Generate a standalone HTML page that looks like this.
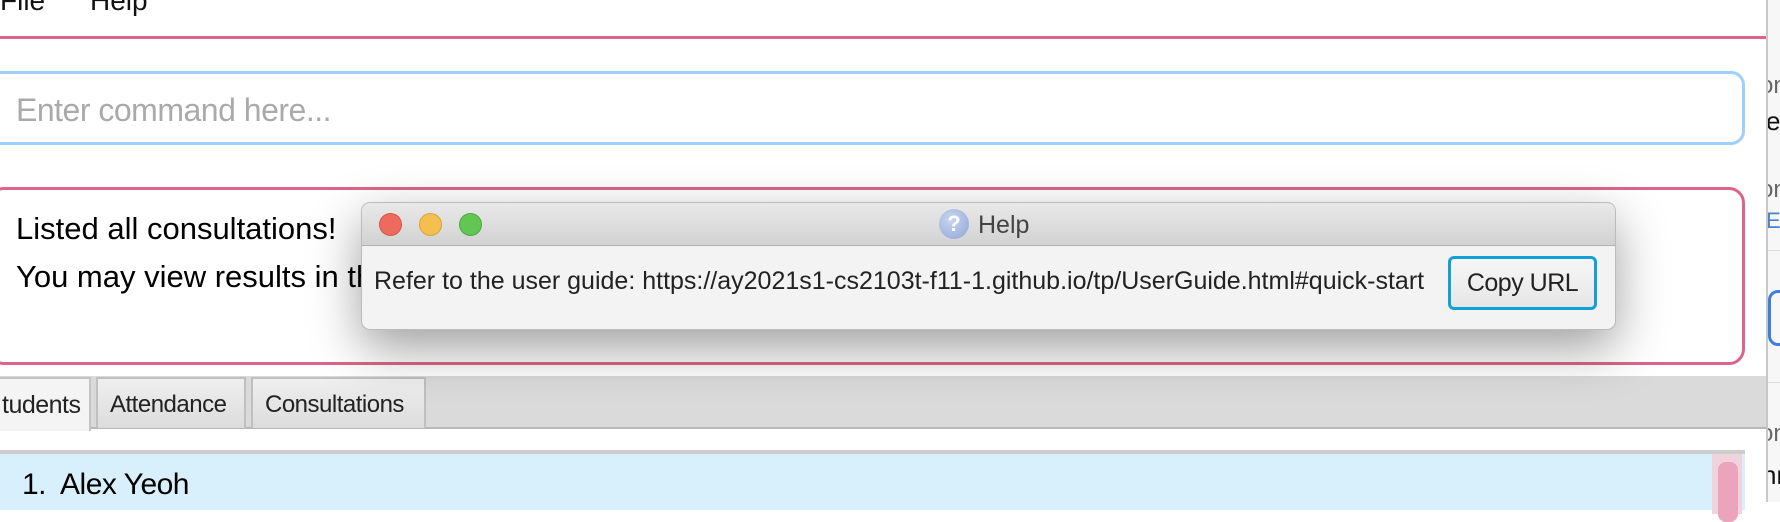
<!DOCTYPE html>
<html><head><meta charset="utf-8"><style>
*{margin:0;padding:0;box-sizing:border-box}
body{width:1780px;height:502px;overflow:hidden;background:#fff;font-family:"Liberation Sans",sans-serif;position:relative}
.a{position:absolute}
</style></head><body>
<div class="a" style="left:0;top:-15px;font-size:28px;color:#111">File</div>
<div class="a" style="left:90px;top:-15px;font-size:28px;color:#111">Help</div>
<div class="a" style="left:0;top:36px;width:1766px;height:3px;background:#dc658a"></div>

<div class="a" style="left:-12px;top:71px;width:1757px;height:74px;border:3px solid #9fd0fb;border-radius:14px"></div>
<div class="a" style="left:16px;top:92px;font-size:32px;color:#aaa;letter-spacing:-0.5px">Enter command here...</div>

<div class="a" style="left:-12px;top:187px;width:1757px;height:178px;border:3px solid #dc658a;border-radius:16px"></div>
<div class="a" style="left:16px;top:205px;font-size:31px;color:#000;line-height:48px">Listed all consultations!<br>You may view results in the</div>

<div class="a" style="left:0;top:376px;width:1766px;height:53px;background:#dadada;border-bottom:2px solid #b8b8b8"></div>
<div class="a" style="left:-5px;top:377px;width:96px;height:54px;background:#f4f4f4;border:2px solid #c4c4c4;border-bottom:none;font-size:25px;color:#222;padding:12px 0 0 5px;letter-spacing:-0.5px">tudents</div>
<div class="a" style="left:96px;top:377px;width:150px;height:51px;background:linear-gradient(#efefef,#dcdcdc);border:2px solid #c0c0c0;border-bottom:none;font-size:24px;color:#222;padding:12px 0 0 12px;letter-spacing:-0.5px">Attendance</div>
<div class="a" style="left:251px;top:377px;width:175px;height:51px;background:linear-gradient(#efefef,#dcdcdc);border:2px solid #c0c0c0;border-bottom:none;font-size:24px;color:#222;padding:12px 0 0 12px;letter-spacing:-0.5px">Consultations</div>

<div class="a" style="left:0;top:450px;width:1745px;height:60px;background:#d8f0fc;border-top:4px solid #cdcdcd"></div>
<div class="a" style="left:22px;top:468px;font-size:30px;color:#000;letter-spacing:-0.5px">1.&nbsp; Alex Yeoh</div>
<div class="a" style="left:1712px;top:454px;width:30px;height:60px;background:#f1d3de"></div>
<div class="a" style="left:1718px;top:462px;width:20px;height:60px;background:#eba4bb;border-radius:8px"></div>

<div class="a" style="left:1766px;top:0;width:14px;height:502px;background:#f7f7f7;border-left:2px solid #c8c8c8;overflow:hidden">
 <div class="a" style="left:-8px;top:72px;font-size:24px;color:#666">on</div>
 <div class="a" style="left:-2px;top:106px;font-size:26px;color:#111">e</div>
 <div class="a" style="left:-8px;top:176px;font-size:24px;color:#666">on</div>
 <div class="a" style="left:-2px;top:208px;font-size:22px;color:#4a7fd0">Ev</div>
 <div class="a" style="left:0;top:250px;width:14px;height:1px;background:#ddd"></div>
 <div class="a" style="left:0;top:290px;width:30px;height:56px;border:3px solid #3d7ee0;border-radius:10px"></div>
 <div class="a" style="left:0;top:382px;width:14px;height:1px;background:#ddd"></div>
 <div class="a" style="left:-8px;top:420px;font-size:24px;color:#666">on</div>
 <div class="a" style="left:-6px;top:460px;font-size:26px;color:#111">nr</div>
</div>

<div class="a" style="left:361px;top:202px;width:1255px;height:128px;border-radius:9px;box-shadow:0 18px 50px rgba(0,0,0,0.38);background:#f3f3f3;border:1px solid #bbb;overflow:hidden">
 <div style="height:43px;background:linear-gradient(#e9e9e9,#d2d2d2);border-bottom:1px solid #b0b0b0;position:relative">
  <div class="a" style="left:17px;top:10px;width:23px;height:23px;border-radius:50%;background:#ed6a5e;border:1px solid #d8544a"></div>
  <div class="a" style="left:57px;top:10px;width:23px;height:23px;border-radius:50%;background:#f5bf4f;border:1px solid #d9a23b"></div>
  <div class="a" style="left:97px;top:10px;width:23px;height:23px;border-radius:50%;background:#62c554;border:1px solid #4ca93f"></div>
  <div class="a" style="left:577px;top:6px;width:30px;height:30px;border-radius:50%;background:radial-gradient(circle at 40% 35%,#c9d6f0,#8ea4d6);color:#fff;font-size:22px;font-weight:bold;text-align:center;line-height:30px">?</div>
  <div class="a" style="left:616px;top:8px;font-size:25px;color:#444">Help</div>
 </div>
 <div class="a" style="left:12px;top:64px;font-size:25px;color:#222;letter-spacing:0;white-space:nowrap">Refer to the user guide: https://ay2021s1-cs2103t-f11-1.github.io/tp/UserGuide.html#quick-start</div>
 <div class="a" style="left:1086px;top:53px;width:149px;height:54px;border:3px solid #13a0d8;border-radius:6px;background:linear-gradient(#f7f7f7,#e6e6e6);font-size:25px;color:#222;text-align:center;line-height:48px;letter-spacing:-0.5px">Copy URL</div>
</div>
</body></html>
